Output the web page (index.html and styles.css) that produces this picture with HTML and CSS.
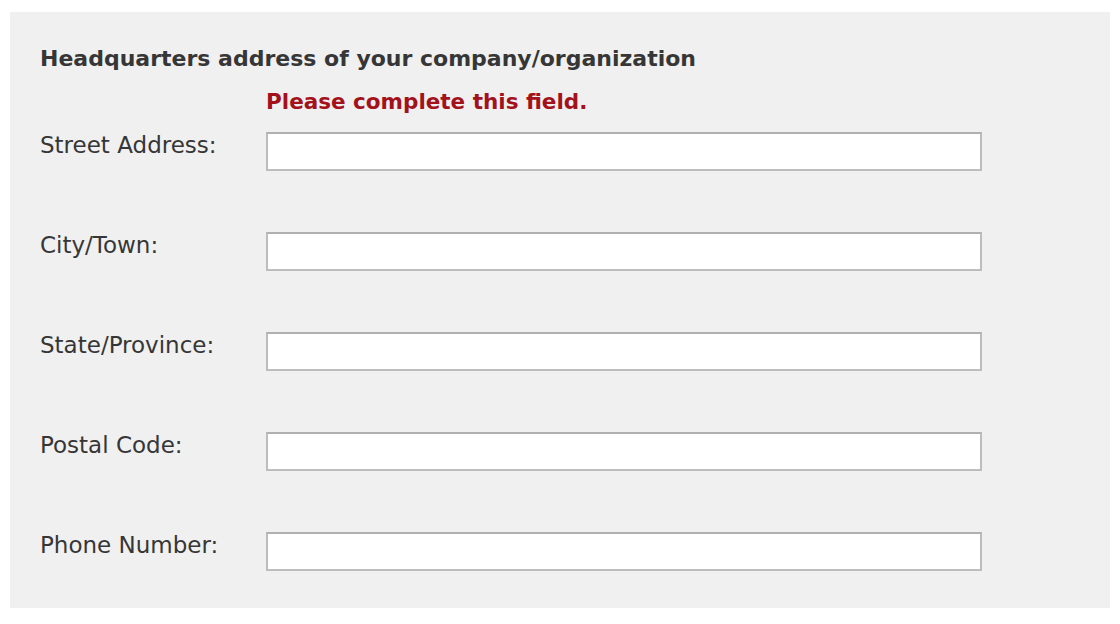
FILE: index.html
```html
<!DOCTYPE html>
<html>
<head>
<meta charset="utf-8">
<link rel="stylesheet" href="styles.css">
</head>
<body>
<div class="panel">
  <h2 class="heading">Headquarters address of your company/organization</h2>
  <div class="error">Please complete this field.</div>
  <div class="rows">
    <label class="label">Street Address:</label><input class="field" type="text">
    <label class="label">City/Town:</label><input class="field" type="text">
    <label class="label">State/Province:</label><input class="field" type="text">
    <label class="label">Postal Code:</label><input class="field" type="text">
    <label class="label">Phone Number:</label><input class="field" type="text">
  </div>
</div>
</body>
</html>
```

FILE: styles.css
```css
html, body { margin: 0; padding: 0; background: #fff; }
body { font-family: "DejaVu Sans", Verdana, sans-serif; color: #333; }
.panel {
  margin: 12px 0 0 10px;
  width: 1100px;
  height: 596px;
  box-sizing: border-box;
  background: #f0f0f0;
  padding: 32px 0 0 30px;
}
.heading {
  margin: 0;
  font-size: 22px;
  line-height: 30px;
  font-weight: bold;
  color: #363636;
}
.error {
  margin: 13px 0 0 226px;
  font-size: 21.5px;
  line-height: 30px;
  font-weight: bold;
  color: #a3121b;
}
.rows {
  margin-top: 15px;
  display: grid;
  grid-template-columns: 226px 716px;
  grid-auto-rows: 39px;
  row-gap: 61px;
}
.label {
  font-size: 23px;
  line-height: 26px;
  color: #363636;
}
.field {
  box-sizing: border-box;
  width: 716px;
  height: 39px;
  margin: 0;
  border: 2px solid #bdbdbd;
  border-top-color: #b0b0b0;
  background: #fff;
  outline: none;
  padding: 0 6px;
}
```
